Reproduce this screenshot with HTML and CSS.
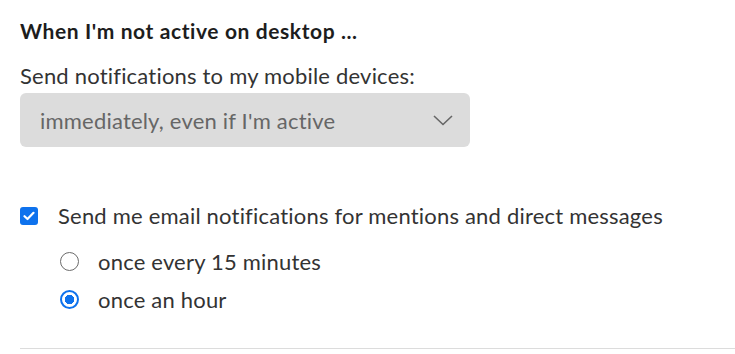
FILE: index.html
```html
<!DOCTYPE html>
<html lang="en">
<head>
  <meta charset="UTF-8">
  <title>Notification settings</title>
  <link rel="stylesheet" href="styles.css">
</head>
<body>
  <div class="settings">
    <h3 class="section-title">When I'm not active on desktop ...</h3>

    <div class="field">
      <label class="field-label">Send notifications to my mobile devices:</label>
      <div class="select">
        <span class="select-value">immediately, even if I'm active</span>
        <svg class="chevron" width="20" height="11" viewBox="0 0 20 11">
          <path d="M1 1 L10 9.5 L19 1" fill="none" stroke="#666" stroke-width="1.6"/>
        </svg>
      </div>
    </div>

    <div class="option-group">
      <label class="check-row">
        <span class="checkbox">
          <svg width="12" height="10" viewBox="0 0 12 10">
            <path d="M1.5 5.2 L4.5 8 L10.5 1.8" fill="none" stroke="#fff" stroke-width="2.2" stroke-linecap="round" stroke-linejoin="round"/>
          </svg>
        </span>
        Send me email notifications for mentions and direct messages
      </label>

      <div class="radio-list">
        <label class="radio-row">
          <span class="radio"></span>
          once every 15 minutes
        </label>
        <label class="radio-row">
          <span class="radio checked"></span>
          once an hour
        </label>
      </div>
    </div>

    <hr class="divider">
  </div>
</body>
</html>
```

FILE: styles.css
```css
body {
  margin: 0;
  font-family: Lato, "Noto Sans", sans-serif;
  background: #ffffff;
  color: #333;
}

.settings {
  padding: 18px 0 0 20px;
}

.section-title {
  margin: 0;
  font-size: 21px;
  font-weight: 700;
  letter-spacing: 0.6px;
  color: #1d1d1d;
  line-height: 26px;
}

.field { margin-top: 19px; }

.field-label {
  display: block;
  font-size: 22px;
  letter-spacing: 0.2px;
  line-height: 26px;
  color: #333;
}

.select {
  margin-top: 4px;
  width: 450px;
  height: 54px;
  box-sizing: border-box;
  background: #dcdcdc;
  border-radius: 6px;
  display: flex;
  align-items: center;
  justify-content: space-between;
  padding: 0 17px 0 20px;
}

.select-value {
  font-size: 22px;
  letter-spacing: 0.2px;
  color: #666;
}

.option-group { margin-top: 56px; }

.check-row {
  display: flex;
  align-items: center;
  gap: 20px;
  font-size: 22px;
  letter-spacing: 0.2px;
  line-height: 26px;
  color: #333;
}

.checkbox {
  width: 18px;
  height: 18px;
  border-radius: 3px;
  background: #0e72ed;
  display: flex;
  align-items: center;
  justify-content: center;
}

.radio-list {
  padding-left: 40px;
  margin-top: 13px;
}

.radio-row {
  display: flex;
  align-items: center;
  gap: 19px;
  height: 38px;
  font-size: 22px;
  letter-spacing: 0.2px;
  color: #333;
}

.radio {
  width: 19px;
  height: 19px;
  box-sizing: border-box;
  border-radius: 50%;
  border: 1.5px solid #6b6b6b;
}

.radio.checked {
  border: 2px solid #0e72ed;
  background: radial-gradient(circle, #0e72ed 0 4.5px, #fff 5px);
}

.divider {
  margin: 30px 0 0;
  border: 0;
  border-top: 1px solid #dcdcdc;
}
```
